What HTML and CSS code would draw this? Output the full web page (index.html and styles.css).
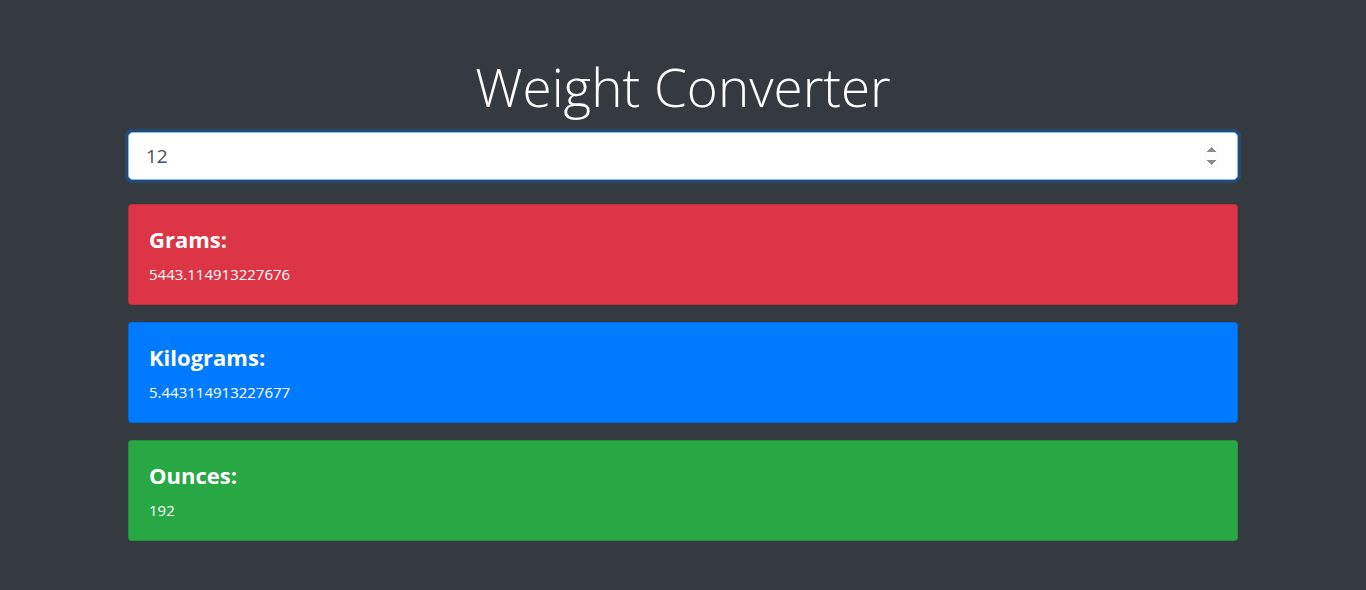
FILE: index.html
```html
<!DOCTYPE html>
<html lang="en">
<head>
<meta charset="utf-8">
<title>Weight Converter</title>
<link rel="stylesheet" href="styles.css">
</head>
<body>
<div class="container">
  <h1 class="title">Weight Converter</h1>
  <div class="field">
    <input class="input" type="number" value="12" autofocus>
  </div>
  <div class="card card-red">
    <h4 class="card-title">Grams:</h4>
    <p class="card-text">5443.114913227676</p>
  </div>
  <div class="card card-blue">
    <h4 class="card-title">Kilograms:</h4>
    <p class="card-text">5.443114913227677</p>
  </div>
  <div class="card card-green">
    <h4 class="card-title">Ounces:</h4>
    <p class="card-text">192</p>
  </div>
</div>
</body>
</html>
```
FILE: styles.css
```css
* { box-sizing: border-box; }
html, body {
  margin: 0;
  padding: 0;
  background: #343a40;
  height: 100%;
}
body {
  font-family: "Open Sans", "Noto Sans", "Liberation Sans", sans-serif;
  color: #fff;
  font-size: 16px;
  line-height: 1.5;
}
.container {
  width: 1140px;
  margin: 0 auto;
  padding: 53px 15px 0;
}
.title {
  margin: 0 0 11px;
  text-align: center;
  font-size: 53px;
  font-weight: 300;
  line-height: 68px;
  color: #fff;
}
.field {
  margin-bottom: 24px;
}
.input {
  display: block;
  width: 100%;
  height: 48px;
  padding: 8px 16px 8px 17px;
  font-family: inherit;
  font-size: 19px;
  color: #495057;
  background: #fff;
  border: 1px solid #80bdff;
  border-radius: 4.8px;
  box-shadow: 0 0 0 3.2px rgba(0,123,255,.25);
  outline: none;
  caret-color: #222;
}
.input::-webkit-inner-spin-button {
  opacity: 1;
  height: 26px;
  margin-right: 2px;
  background: #f0f0f0;
}
.card {
  border: 1px solid rgba(0,0,0,.125);
  border-radius: 4px;
  padding: 20px;
  margin-bottom: 17px;
  height: 101px;
}
.card-red { background: #dc3545; }
.card-blue { background: #007bff; }
.card-green { background: #28a745; }
.card-title {
  margin: 0 0 8px;
  font-size: 22px;
  font-weight: 700;
  line-height: 29px;
}
.card-text {
  margin: 0;
  font-size: 15px;
  line-height: 24px;
}
```
